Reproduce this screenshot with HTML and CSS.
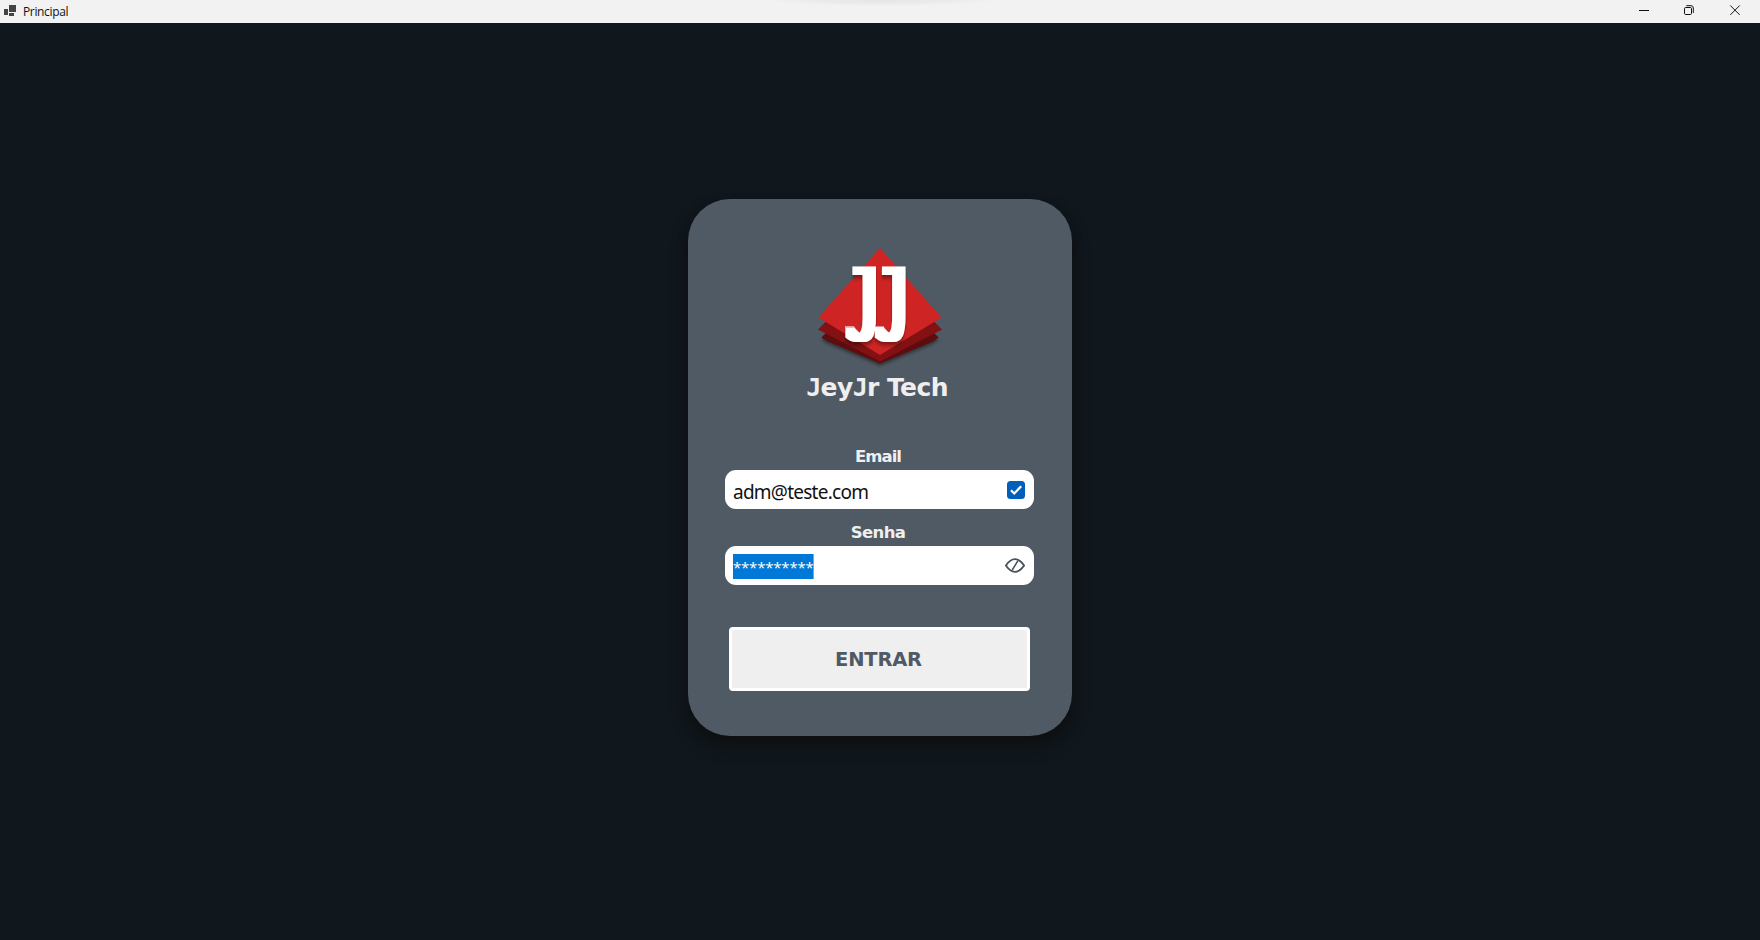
FILE: index.html
```html
<!DOCTYPE html>
<html lang="pt-BR">
<head>
<meta charset="utf-8">
<title>Principal</title>
<link rel="stylesheet" href="styles.css">
</head>
<body>
<header class="titlebar">
  <svg class="app-icon" width="12" height="11" viewBox="0 0 12 11" fill="#444"><path d="M5 0h7v7H5zM0 4h4v6H0zM5 8h5v3H5z"/></svg>
  <span class="window-title">Principal</span>
  <svg class="window-controls" width="102" height="12" viewBox="0 0 102 12" fill="none" stroke="#111">
    <path d="M0 5.5h10" stroke-width="1"/>
    <rect x="45.5" y="2.5" width="7" height="7" rx="1.2"/>
    <path d="M47.3 .7h4.7q2.3 0 2.3 2.3v4.900"/>
    <path d="M91.300 .5l9.400 9.400M100.700 .5l-9.400 9.400"/>
  </svg>
</header>
<main class="stage">
  <form class="card">
    <svg class="logo" width="130" height="128" viewBox="0 0 130 128">
      <defs>
        <filter id="soft" x="-20%" y="-20%" width="140%" height="150%"><feDropShadow dx="0" dy="2.5" stdDeviation="1.5" flood-color="#000" flood-opacity=".4"/></filter>
        <filter id="heavy" x="-20%" y="-20%" width="140%" height="150%"><feMorphology operator="dilate" radius="5 .01"/><feDropShadow dx="0" dy="2.5" stdDeviation="1.5" flood-color="#000" flood-opacity=".4"/></filter>
      </defs>
      <path d="M6.500 91.500L12 86h106l5.500 5.500-5.500 4L65 117.500 12 95z" fill="#5d080a" filter="url(#soft)"/>
      <path d="M3 83.500L10.500 76h109l7.500 7.500L65 115.500z" fill="#831113"/>
      <path d="M65 2L126.500 71.500 65 109 3.500 71.500z" fill="#cf2424"/>
      <text class="monogram" transform="translate(31.500 94.500) scale(.7 1.300)" x="0 42" filter="url(#heavy)">JJ</text>
    </svg>
    <h1 class="brand"><span class="brand-initial">J</span>ey<span class="brand-initial">J</span>r Tech</h1>
    <label class="label label-email" for="email">Email</label>
    <div class="field" id="email">
      <span class="email-value">adm@teste.com</span>
      <svg width="18" height="18" viewBox="0 0 18 18"><rect width="18" height="18" rx="3.500" fill="#005fb8"/><path d="M4 9.300l3.200 3.200L14.200 5.300" fill="none" stroke="#fff" stroke-width="2.200"/></svg>
    </div>
    <label class="label label-password" for="password">Senha</label>
    <div class="field" id="password">
      <span class="password-value">**********</span>
      <svg class="eye" width="20" height="15" viewBox="0 0 20 15" fill="none" stroke="#46515b" stroke-width="1.800"><path d="M.9 7.500C4 3 7 1.200 10 1.200S16 3 19.100 7.500C16 12 13 13.800 10 13.800S4 12 .9 7.500z"/><path d="M12.800 3L7.200 12" stroke-width="1.500"/></svg>
    </div>
    <button class="submit" type="button">ENTRAR</button>
  </form>
</main>
</body>
</html>
```
FILE: styles.css
```css
* { box-sizing: border-box; }
body {
  margin: 0;
  height: 940px;
  overflow: hidden;
  display: flex;
  flex-direction: column;
  background: #10171d;
  font-family: "DejaVu Sans", sans-serif;
}
.titlebar {
  flex: none;
  height: 23px;
  display: flex;
  align-items: flex-start;
  padding: 5px 19px 0 4px;
  background: radial-gradient(ellipse 118px 6px at 881px 0, #e6e6e6 0, #eaeaea 50%, #f2f2f2 100%) #f2f2f2;
}
.window-title {
  margin-left: 7px;
  font: 12px/14px "Open Sans", sans-serif;
  letter-spacing: -.35px;
  color: #111;
}
.window-controls { margin-left: auto; }
.stage {
  flex: 1;
  display: flex;
  justify-content: center;
  align-items: flex-start;
  padding-top: 176px;
}
.card {
  width: 384px;
  height: 537px;
  display: flex;
  flex-direction: column;
  align-items: center;
  padding: 47px 1px 0 0;
  border-radius: 42px;
  background: #505a64;
  box-shadow: 0 10px 16px rgba(17, 17, 17, .65), 0 6px 10px rgba(8, 10, 11, .5);
}
.logo { flex: none; }
.monogram {
  font: 78px "DejaVu Sans Mono", monospace;
  fill: #fff;
}
.brand {
  margin: -1px 0 0;
  padding-right: 5px;
  font-size: 25px;
  line-height: 30px;
  letter-spacing: -.6px;
  color: #efefef;
}
.brand-initial { font-family: "DejaVu Sans Mono", monospace; }
.label {
  padding-right: 3px;
  font-size: 16.500px;
  line-height: 20px;
  font-weight: bold;
  color: #efefef;
  letter-spacing: -.6px;
}
.label-email {
  margin-top: 44px;
  letter-spacing: -1px;
}
.label-password { margin-top: 14px; }
.field {
  flex: none;
  width: 309px;
  height: 39px;
  margin-top: 3px;
  padding: 0 9px 0 8px;
  display: flex;
  align-items: center;
  justify-content: space-between;
  border-radius: 11px;
  background: #fff;
}
.email-value {
  padding-top: 4px;
  font: 19px/30px "Noto Sans", sans-serif;
  letter-spacing: -.75px;
  color: #111;
}
.password-value {
  height: 25px;
  margin-top: 2px;
  width: 81px;
  border-right: 1px solid #ff8728;
  background: #0078d7;
  color: #fff;
  font: 15px/27px "Open Sans", sans-serif;
  letter-spacing: -.2px;
}
.eye { margin-top: -1px; }
.submit {
  flex: none;
  width: 301px;
  height: 64px;
  margin-top: 42px;
  padding: 0 2px 0 0;
  border: 3px solid #fff;
  border-radius: 4px;
  background: #efefef;
  color: #505a64;
  font: bold 19.500px "DejaVu Sans", sans-serif;
  letter-spacing: -.2px;
}
```
